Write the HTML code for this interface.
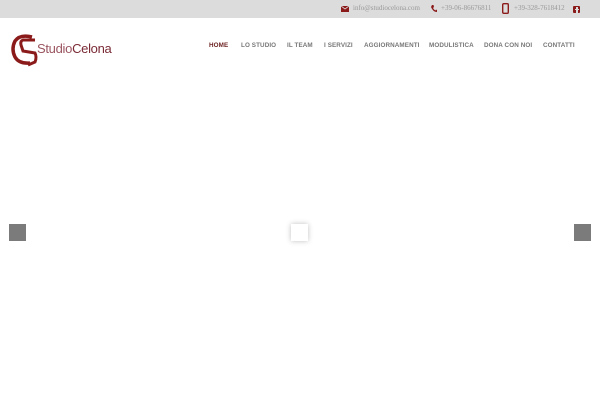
<!DOCTYPE html>
<html><head><meta charset="utf-8"><style>
*{margin:0;padding:0;box-sizing:border-box}
body{width:600px;height:400px;background:#fff;position:relative;overflow:hidden;font-family:"Liberation Sans",sans-serif}
.top{position:absolute;left:0;top:0;width:600px;height:18px;background:#dcdcdc}
.t{position:absolute;top:4px;font-family:"Liberation Serif",serif;font-size:7px;color:#999;white-space:nowrap}
.nav{position:absolute;top:42px;font-size:6.3px;font-weight:bold;color:#777;white-space:nowrap;letter-spacing:0.1px}
.sq{position:absolute;width:17px;height:17px;background:#7b7b7b}
</style></head><body>
<div class="top"></div>
<svg style="position:absolute;left:341px;top:6px" width="8" height="6"><rect width="8" height="6" fill="#8b1a1a"/><path d="M0 0L4 3L8 0" stroke="#dcdcdc" fill="none" stroke-width="0.8"/></svg>
<div class="t" style="left:353px">info@studiocelona.com</div>
<svg style="position:absolute;left:431px;top:5px" width="6" height="7"><path d="M1 0L2.5 0L3 2L2 3Q3 5 4.5 5.5L5 4.5L6.5 5.5L6 7Q2 7 0 2Z" fill="#8b1a1a"/></svg>
<div class="t" style="left:441px">+39-06-86676811</div>
<svg style="position:absolute;left:502px;top:3px" width="7" height="11"><rect x="0.7" y="0.7" width="5.6" height="9.6" rx="1" fill="none" stroke="#8b1a1a" stroke-width="1.4"/></svg>
<div class="t" style="left:514px">+39-328-7618412</div>
<div style="position:absolute;left:573px;top:6px;width:7px;height:7px;background:#8b1a1a;border-radius:1px"></div>
<div style="position:absolute;left:576px;top:7px;width:2px;height:6px;background:#dcdcdc"></div>
<div style="position:absolute;left:575px;top:9px;width:4px;height:1px;background:#dcdcdc"></div>

<svg style="position:absolute;left:10px;top:33px" width="32" height="34" viewBox="0 0 32 34">
<path d="M22 4 Q10 1 5 8 Q1 16 5 24 Q9 31 20 30" fill="none" stroke="#8b1a1a" stroke-width="3.5"/>
<path d="M25 7 L13 7 Q10 8 11 12 L13 18 L25 20 Q27 24 25 29 L18 32" fill="none" stroke="#8b1a1a" stroke-width="3"/>
</svg>
<div style="position:absolute;left:37px;top:41px;font-size:13px;color:#7a2a35;letter-spacing:-0.3px;white-space:nowrap"><span style="color:#9a5560">Studio</span>Celona</div>

<div class="nav" style="left:209px;color:#6b1f1f">HOME</div>
<div class="nav" style="left:241px">LO STUDIO</div>
<div class="nav" style="left:287px">IL TEAM</div>
<div class="nav" style="left:324px">I SERVIZI</div>
<div class="nav" style="left:364px">AGGIORNAMENTI</div>
<div class="nav" style="left:429px">MODULISTICA</div>
<div class="nav" style="left:484px">DONA CON NOI</div>
<div class="nav" style="left:543px">CONTATTI</div>

<div class="sq" style="left:9px;top:224px"></div>
<div class="sq" style="left:574px;top:224px"></div>
<div style="position:absolute;left:291px;top:224px;width:17px;height:17px;background:#fff;box-shadow:0 0 5px rgba(0,0,0,0.25)"></div>
</body></html>
